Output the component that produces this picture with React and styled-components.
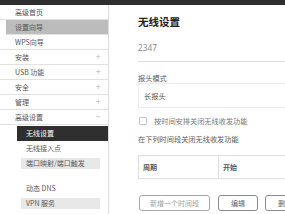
import React from "react";
import styled, { createGlobalStyle } from "styled-components";

const Global = createGlobalStyle`
  html, body { margin: 0; padding: 0; background: #fff; overflow: hidden; }
  body { font-family: "Noto Sans CJK SC", "Noto Sans", sans-serif; }
  * { box-sizing: border-box; }
`;

const Page = styled.div`
  width: 285px;
  height: 214px;
  overflow: hidden;
  display: flex;
  flex-direction: column;
`;

const TopBar = styled.div`
  height: 5px;
  flex: none;
  background: #2e2e2e;
`;

const Body = styled.div`
  flex: 1;
  display: flex;
  min-height: 0;
`;

const Sidebar = styled.nav`
  width: 109px;
  flex: none;
  border-right: 1px solid #dcdcdc;
  display: flex;
  flex-direction: column;
`;

const MenuItem = styled.div`
  height: 15px;
  flex: none;
  display: flex;
  align-items: center;
  justify-content: space-between;
  border-bottom: 1px solid #e2e2e2;
  padding: 0 7px 0 ${p => (p.$active ? 9 : 15)}px;
  margin-left: ${p => (p.$active ? 6 : 0)}px;
  background: ${p => (p.$active ? "#bcbcbc" : "transparent")};
  font-size: 7px;
  line-height: 1;
  color: #555;
`;

const Sign = styled.span`
  font-family: "DejaVu Sans", sans-serif;
  font-size: 7px;
  color: #b5b5b5;
`;

const SubMenu = styled.div`
  display: flex;
  flex-direction: column;
  padding-top: 1px;
`;

const SubItem = styled.div`
  flex: none;
  display: flex;
  align-items: center;
  font-size: 7px;
  line-height: 1;
  height: ${p => (p.$variant === "shade" ? 11 : 15)}px;
  margin: ${p => (p.$variant === "shade" ? "2px 8px 2px 21px" : "0 0 0 17px")};
  padding-left: ${p => (p.$variant === "shade" ? 5 : 9)}px;
  background: ${p =>
    p.$variant === "active" ? "#2f2f2f" : p.$variant === "shade" ? "#e8e8e8" : "transparent"};
  color: ${p => (p.$variant === "active" ? "#fff" : "#555")};
`;

const Gap = styled.div`
  height: 10px;
  flex: none;
`;

const Main = styled.main`
  flex: 1;
  min-width: 0;
  overflow: hidden;
  padding: 10px 0 0 29px;
`;

const Inner = styled.div`
  width: 320px;
  display: flex;
  flex-direction: column;
`;

const Title = styled.h1`
  margin: 0;
  height: 14px;
  font-size: 10.5px;
  line-height: 14px;
  font-weight: 700;
  color: #222;
`;

const Value = styled.div`
  margin-top: 13px;
  height: 20px;
  padding-bottom: 7px;
  border-bottom: 1px solid #dedede;
  font-family: "Noto Sans", sans-serif;
  font-size: 8.3px;
  line-height: 12px;
  color: #8a8a8a;
`;

const Label = styled.div`
  margin-top: ${p => p.$mt || 0}px;
  height: 9px;
  font-size: 7.2px;
  line-height: 9px;
  color: ${p => p.$color || "#5a5a5a"};
`;

const SelectBox = styled.div`
  height: 25px;
  border: 1px solid #ececec;
  display: flex;
  align-items: center;
  padding-left: 5px;
  font-size: 7.2px;
  color: #555;
`;

const CheckRow = styled.label`
  margin-top: 8px;
  height: 10px;
  display: flex;
  align-items: center;
  gap: 7px;
  padding-left: 1px;
  font-size: 7.2px;
  color: #777;
`;

const CheckBox = styled.span`
  width: 8px;
  height: 8px;
  border: 1px solid #c4c4c4;
  border-radius: 1px;
  flex: none;
`;

const Table = styled.div`
  margin-top: 11px;
  height: 24px;
  border: 1px solid #e0e0e0;
  display: flex;
`;

const HeadCell = styled.div`
  width: ${p => p.$w || "auto"};
  flex: ${p => (p.$w ? "none" : 1)};
  display: flex;
  align-items: center;
  padding-left: 4px;
  border-right: ${p => (p.$w ? "1px solid #e0e0e0" : "none")};
  font-size: 7px;
  font-weight: 700;
  color: #555;
`;

const Buttons = styled.div`
  margin-top: 16px;
  display: flex;
  padding-left: 1px;
`;

const Button = styled.button`
  height: 16px;
  width: ${p => p.$w}px;
  margin-right: ${p => p.$mr || 0}px;
  flex: none;
  border: 1px solid ${p => (p.$muted ? "#a8a8a8" : "#8a8a8a")};
  border-radius: 3px;
  background: #fff;
  font-family: "Noto Sans CJK SC", sans-serif;
  font-size: 7px;
  color: ${p => (p.$muted ? "#a0a0a0" : "#666")};
  padding: 0;
  display: flex;
  align-items: center;
  justify-content: center;
`;

const menu = [
  { t: "高级首页" },
  { t: "设置向导", active: true },
  { t: "WPS向导" },
  { t: "安装", sign: "+" },
  { t: "USB 功能", sign: "+" },
  { t: "安全", sign: "+" },
  { t: "管理", sign: "+" },
  { t: "高级设置", sign: "−" },
];

export default function App() {
  return (
    <Page>
      <Global />
      <TopBar />
      <Body>
        <Sidebar>
          {menu.map(m => (
            <MenuItem key={m.t} $active={m.active}>
              <span>{m.t}</span>
              {m.sign && <Sign>{m.sign}</Sign>}
            </MenuItem>
          ))}
          <SubMenu>
            <SubItem $variant="active">无线设置</SubItem>
            <SubItem>无线接入点</SubItem>
            <SubItem $variant="shade">端口映射/端口触发</SubItem>
            <Gap />
            <SubItem>动态 DNS</SubItem>
            <SubItem $variant="shade">VPN 服务</SubItem>
          </SubMenu>
        </Sidebar>
        <Main>
          <Inner>
            <Title>无线设置</Title>
            <Value>2347</Value>
            <Label $mt={12}>报头模式</Label>
            <SelectBox>长报头</SelectBox>
            <CheckRow>
              <CheckBox />
              <span>按时间安排关闭无线收发功能</span>
            </CheckRow>
            <Label $mt={9}>在下列时间段关闭无线收发功能</Label>
            <Table>
              <HeadCell $w="80px">周期</HeadCell>
              <HeadCell>开始</HeadCell>
            </Table>
            <Buttons>
              <Button $w={71} $mr={8} $muted>新增一个时间段</Button>
              <Button $w={40} $mr={7}>编辑</Button>
              <Button $w={40}>删除</Button>
            </Buttons>
          </Inner>
        </Main>
      </Body>
    </Page>
  );
}
